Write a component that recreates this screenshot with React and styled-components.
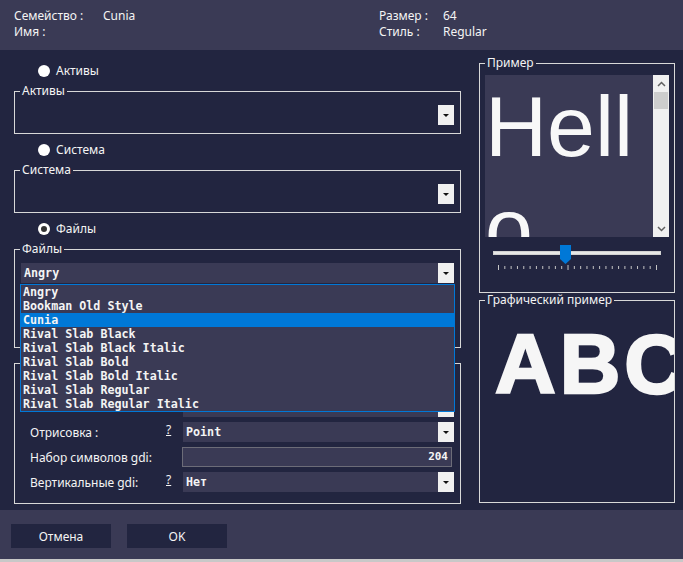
import React from 'react';
import styled, { createGlobalStyle } from 'styled-components';

const ui = `"Noto Sans", "Open Sans", sans-serif`;
const mono = `"DejaVu Sans Mono", "Liberation Mono", monospace`;
const panel = '#3a3a55';
const deep = '#222540';
const line = '#d8d8d8';
const accent = '#0078d7';

const fonts = [
  'Angry',
  'Bookman Old Style',
  'Cunia',
  'Rival Slab Black',
  'Rival Slab Black Italic',
  'Rival Slab Bold',
  'Rival Slab Bold Italic',
  'Rival Slab Regular',
  'Rival Slab Regular Italic',
];

const Global = createGlobalStyle`
  html, body { margin: 0; padding: 0; background: #c8c8c8; }
  body { font-family: ${ui}; font-size: 12px; color: #f4f4f4; }
  * { box-sizing: border-box; }
`;

const Window = styled.div`
  width: 683px;
  height: 562px;
  display: flex;
  flex-direction: column;
  background: ${deep};
  overflow: hidden;
`;

const Header = styled.header`
  flex: none;
  height: 50px;
  background: ${panel};
  display: grid;
  grid-template-columns: 89px 276px 64px 1fr;
  grid-auto-rows: 16px;
  padding: 8px 0 0 14px;
  line-height: 16px;
`;

const Main = styled.main`
  flex: 1;
  display: flex;
  gap: 18px;
  padding: 0 8px 0 14px;
`;

const LeftColumn = styled.div`
  width: 447px;
  display: flex;
  flex-direction: column;
  padding-top: 5px;
`;

const RightColumn = styled.div`
  width: 196px;
  display: flex;
  flex-direction: column;
  padding-top: 13px;
  gap: 7px;
`;

const RadioRow = styled.label`
  height: 15px;
  margin: 8px 0 13px;
  display: flex;
  align-items: center;
  gap: 6px;
  padding-left: 24px;
  line-height: 15px;
`;

const RadioDot = styled.span`
  width: 12px;
  height: 12px;
  border-radius: 50%;
  background: ${(p) => (p.$checked ? '#333' : '#fff')};
  box-shadow: ${(p) => (p.$checked ? 'inset 0 0 0 3px #fff' : 'none')};
`;

const Group = styled.section`
  position: relative;
  border: 1px solid ${line};
  padding: ${(p) => p.$pad || '13px 6px 8px 6px'};
  height: ${(p) => p.$h || 'auto'};
  margin-top: ${(p) => p.$mt || '0'};
`;

const Caption = styled.span`
  position: absolute;
  top: -8px;
  left: 5px;
  padding: 0 2px;
  line-height: 14px;
  background: ${deep};
  white-space: nowrap;
  z-index: 1;
`;

const Select = styled.div`
  position: relative;
  height: 20px;
  display: flex;
  background: ${(p) => (p.$empty ? 'transparent' : panel)};
`;

const Value = styled.span`
  flex: 1;
  padding-left: 3px;
  font-family: ${mono};
  font-weight: bold;
  font-size: 11.7px;
  line-height: 20px;
  white-space: nowrap;
  overflow: hidden;
`;

const DropButton = styled.span`
  width: 16px;
  flex: none;
  background: #f0f0f0;
  display: flex;
  align-items: center;
  justify-content: center;

  &::after {
    content: '';
    border-left: 3px solid transparent;
    border-right: 3px solid transparent;
    border-top: 3px solid #111;
    margin-top: 1px;
  }
`;

const DropList = styled.ul`
  position: absolute;
  top: calc(100% + 1px);
  left: -1px;
  right: -1px;
  margin: 0;
  padding: 0;
  list-style: none;
  border: 1px solid ${accent};
  background: ${panel};
  z-index: 5;
`;

const Option = styled.li`
  height: 14px;
  line-height: 14px;
  padding-left: 2px;
  font-family: ${mono};
  font-weight: bold;
  font-size: 11.7px;
  white-space: nowrap;
  background: ${(p) => (p.$active ? accent : 'transparent')};
`;

const Rows = styled.div`
  display: flex;
  flex-direction: column;
  gap: 5px;
`;

const Row = styled.div`
  height: 20px;
  display: grid;
  grid-template-columns: 136px 17px 1fr;
  align-items: center;
`;

const Help = styled.span`
  text-decoration: underline;
  line-height: 14px;
  align-self: start;
  margin-top: 1px;
`;

const Input = styled.div`
  height: 20px;
  margin: 0 2px 0 -1px;
  border: 1px solid #6c6c78;
  background: ${panel};
  text-align: right;
  padding-right: 3px;
  font-family: ${mono};
  font-weight: bold;
  font-size: 11px;
  line-height: 18px;
`;

const Preview = styled.div`
  height: 162px;
  display: flex;
  background: ${panel};
`;

const PreviewText = styled.div`
  flex: 1;
  overflow: hidden;
  font-family: "Liberation Sans", Arial, sans-serif;
  font-size: 86px;
  line-height: 102px;
  word-break: break-all;
  color: #f8f8f8;
`;

const Scrollbar = styled.div`
  width: 16px;
  flex: none;
  background: #f0f0f0;
  display: flex;
  flex-direction: column;
`;

const ScrollArrow = styled.div`
  height: 17px;
  display: flex;
  align-items: center;
  justify-content: center;
  margin-top: ${(p) => (p.$down ? 'auto' : '0')};
`;

const ScrollThumb = styled.div`
  height: 17px;
  margin: 0 1px;
  background: #cdcdcd;
`;

const SliderBox = styled.div`
  position: relative;
  padding: 14px 8px 0;
`;

const Track = styled.div`
  height: 4px;
  background: #e7e7e7;
  border: 1px solid #d2d2d2;
`;

const Thumb = styled.svg`
  position: absolute;
  top: 8px;
  display: block;
`;

const Ticks = styled.svg`
  display: block;
  margin-top: 10px;
`;

const SampleArea = styled.div`
  height: 100%;
  overflow: hidden;
  padding: 21px 0 0 15px;
`;

const Sample = styled.div`
  font-family: "Liberation Sans", Arial, sans-serif;
  font-weight: bold;
  font-size: 84px;
  line-height: 84px;
  letter-spacing: 4px;
  white-space: nowrap;
  color: #f6f6f6;
  -webkit-text-stroke: 2.5px #f6f6f6;
  -webkit-font-smoothing: none;
`;

const Footer = styled.footer`
  flex: none;
  height: 49px;
  background: ${panel};
  display: flex;
  gap: 16px;
  padding: 14px 0 0 11px;
`;

const Button = styled.button`
  width: 100px;
  height: 24px;
  border: none;
  background: ${deep};
  color: #f4f4f4;
  font-family: ${ui};
  font-size: 12px;
  padding: 0;
`;

const Edge = styled.div`
  flex: none;
  height: 3px;
  background: #c8c8c8;
`;

const Chevron = ({ down }) => (
  <svg width="9" height="6" viewBox="0 0 9 6">
    <polyline
      points={down ? '1,1 4.5,4.5 8,1' : '1,5 4.5,1.5 8,5'}
      fill="none"
      stroke="#606060"
      strokeWidth="1.5"
    />
  </svg>
);

const tickCount = 26;
const TickMarks = () => (
  <Ticks width="168" height="5">
    {Array.from({ length: tickCount }, (_, i) => {
      const x = 5.5 + (i * 158) / (tickCount - 1);
      const tall = i === 0 || i === tickCount - 1 || i === 11;
      return (
        <line key={i} x1={x} x2={x} y1={tall ? 0 : 1} y2={tall ? 5 : 4} stroke="#c4c4c4" strokeWidth="1" />
      );
    })}
  </Ticks>
);

const Combo = ({ value, empty, children }) => (
  <Select $empty={empty}>
    <Value>{value}</Value>
    <DropButton />
    {children}
  </Select>
);

export default function App() {
  const sliderPos = 75;

  return (
    <Window>
      <Global />
      <Header>
        <span>Семейство :</span>
        <span>Cunia</span>
        <span>Размер :</span>
        <span>64</span>
        <span>Имя :</span>
        <span />
        <span>Стиль :</span>
        <span>Regular</span>
      </Header>

      <Main>
        <LeftColumn>
          <RadioRow>
            <RadioDot />
            Активы
          </RadioRow>
          <Group>
            <Caption>Активы</Caption>
            <Combo empty />
          </Group>

          <RadioRow>
            <RadioDot />
            Система
          </RadioRow>
          <Group>
            <Caption>Система</Caption>
            <Combo empty />
          </Group>

          <RadioRow>
            <RadioDot $checked />
            Файлы
          </RadioRow>
          <Group $h="99px">
            <Caption>Файлы</Caption>
            <Combo value="Angry">
              <DropList>
                {fonts.map((f) => (
                  <Option key={f} $active={f === 'Cunia'}>
                    {f}
                  </Option>
                ))}
              </DropList>
            </Combo>
          </Group>

          <Group $pad="8px 6px 11px 15px" $mt="15px">
            <Rows>
              {/* the first two rows sit under the open font list */}
              <Row>
                <span />
                <span />
                <Combo />
              </Row>
              <Row>
                <span />
                <span />
                <Combo />
              </Row>
              <Row>
                <span>Отрисовка :</span>
                <Help>?</Help>
                <Combo value="Point" />
              </Row>
              <Row>
                <span>Набор символов gdi:</span>
                <span />
                <Input>204</Input>
              </Row>
              <Row>
                <span>Вертикальные gdi:</span>
                <Help>?</Help>
                <Combo value="Нет" />
              </Row>
            </Rows>
          </Group>
        </LeftColumn>

        <RightColumn>
          <Group $pad="11px 5px 0 5px" $h="230px">
            <Caption>Пример</Caption>
            <Preview>
              <PreviewText>Hello</PreviewText>
              <Scrollbar>
                <ScrollArrow>
                  <Chevron />
                </ScrollArrow>
                <ScrollThumb />
                <ScrollArrow $down>
                  <Chevron down />
                </ScrollArrow>
              </Scrollbar>
            </Preview>
            <SliderBox>
              <Track />
              <Thumb width="11" height="19" viewBox="0 0 11 19" style={{ left: sliderPos }}>
                <path d="M0 0H11V14L5.5 19L0 14Z" fill={accent} />
              </Thumb>
              <TickMarks />
            </SliderBox>
          </Group>

          <Group $pad="0" $h="203px">
            <Caption>Графический пример</Caption>
            <SampleArea>
              <Sample>ABC</Sample>
            </SampleArea>
          </Group>
        </RightColumn>
      </Main>

      <Footer>
        <Button>Отмена</Button>
        <Button>OK</Button>
      </Footer>
      <Edge />
    </Window>
  );
}
